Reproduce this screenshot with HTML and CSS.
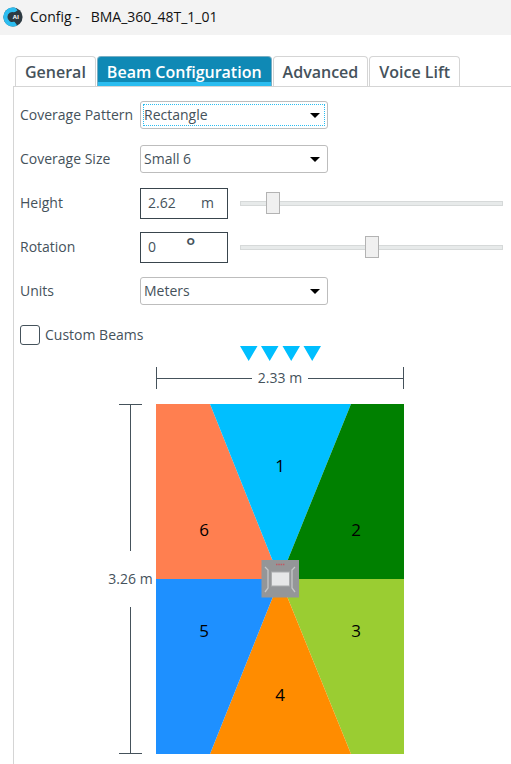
FILE: index.html
```html
<!DOCTYPE html>
<html lang="en">
<head>
<meta charset="utf-8">
<title>Config - BMA_360_48T_1_01</title>
<link rel="stylesheet" href="styles.css">
</head>
<body>
<header class="titlebar">
  <svg class="logo" viewBox="0 0 20 20" aria-hidden="true">
    <circle cx="10" cy="10" r="9.6" fill="#2d3a42"/>
    <path d="M12 .6A9.6 9.6 0 1 0 14.2 18.6L11.4 14.6A5 5 0 1 1 11.4 5.4L14.6 3.2Z" fill="#2cbdf0"/>
    <circle cx="13" cy="10" r="5" fill="#2d3a42"/>
    <text x="9.8" y="12.3" class="logo-text">AI</text>
  </svg>
  <h1 class="title">Config -&nbsp;&nbsp; BMA_360_48T_1_01</h1>
</header>
<nav class="tabs">
  <button class="tab" type="button">General</button>
  <button class="tab tab-active" type="button">Beam Configuration</button>
  <button class="tab" type="button">Advanced</button>
  <button class="tab" type="button">Voice Lift</button>
</nav>
<main class="panel">
  <div class="row">
    <label for="pattern">Coverage Pattern</label>
    <span class="select focused"><select id="pattern"><option>Rectangle</option></select></span>
  </div>
  <div class="row">
    <label for="size">Coverage Size</label>
    <span class="select"><select id="size"><option>Small 6</option></select></span>
  </div>
  <div class="row">
    <label for="height">Height</label>
    <span class="number"><input id="height" type="text" value="2.62"><span class="unit">m</span></span>
    <input class="slider" type="range" min="0" max="1000" value="102" aria-label="Height slider">
  </div>
  <div class="row">
    <label for="rotation">Rotation</label>
    <span class="number"><input id="rotation" class="short" type="text" value="0"><span class="degree">°</span></span>
    <input class="slider" type="range" min="-180" max="180" value="0" aria-label="Rotation slider">
  </div>
  <div class="row">
    <label for="units">Units</label>
    <span class="select"><select id="units"><option>Meters</option></select></span>
  </div>
  <div class="check">
    <input id="custom" type="checkbox">
    <label for="custom">Custom Beams</label>
  </div>
  <section class="diagram">
    <svg class="arrows" width="82" height="15" viewBox="0 0 82 15" aria-hidden="true">
      <path d="M0 0h17.500L8.700 15ZM21 0h17.500L29.700 15ZM42.500 0h17.500L51.200 15ZM63.500 0h17.500L72.200 15Z" fill="#00bfff"/>
    </svg>
    <div class="dim-h"><span>2.33 m</span></div>
    <div class="dim-v"><span>3.26 m</span></div>
    <svg class="beams" width="248" height="350" viewBox="0 0 248 350">
      <path d="M0 0H54L124 175H0Z" fill="#ff7f50"/>
      <path d="M54 0H195L124 175Z" fill="#00bfff"/>
      <path d="M195 0H248V175H124Z" fill="#008000"/>
      <path d="M124 175H248V350H195Z" fill="#9acd32"/>
      <path d="M124 175L195 350H54Z" fill="#ff8c00"/>
      <path d="M0 175H124L54 350H0Z" fill="#1e90ff"/>
      <g class="beam-numbers">
        <text x="124" y="68">1</text>
        <text x="200" y="132">2</text>
        <text x="200" y="233">3</text>
        <text x="124" y="297">4</text>
        <text x="48" y="233">5</text>
        <text x="48" y="132">6</text>
      </g>
      <rect x="105.500" y="156" width="37.500" height="37.500" fill="#949698"/>
      <path d="M109 163l3 3v18l-3 4M139 163l-3 3v18l3 4" fill="none" stroke="#c5c7c8" stroke-width="1.300"/>
      <path d="M120 160.500h9" stroke="#c05862" stroke-width="1.500" stroke-dasharray="1.500 .8"/>
      <rect x="115.500" y="168" width="18" height="14" fill="#e6e7e8" stroke="#aaacad"/>
    </svg>
  </section>
</main>
</body>
</html>
```
FILE: styles.css
```css
* {
  box-sizing: border-box;
}

body {
  margin: 0;
  min-height: 100vh;
  display: flex;
  flex-direction: column;
  background: #fff;
  color: #45525b;
  font: 14px/20px "Open Sans", "Noto Sans", sans-serif;
}

button, input, select {
  font: inherit;
  color: inherit;
}

.titlebar {
  display: flex;
  align-items: center;
  gap: 7px;
  height: 35px;
  padding: 0 3px 2px;
  background: #f3f3f3;
}

.logo {
  width: 20px;
  height: 20px;
}

.logo-text {
  font: bold 6px "Open Sans", sans-serif;
  fill: #fff;
}

.title {
  margin: 0;
  font-size: 14px;
  font-weight: 400;
  color: #111;
}

.tabs {
  display: flex;
  gap: 1px;
  padding: 21px 15px 0;
}

.tab {
  height: 30px;
  padding: 0 9px;
  border: 1px solid #d5d5d5;
  border-bottom: 0;
  border-radius: 4px 4px 0 0;
  background: #fff;
  font-size: 16px;
  font-weight: 600;
  white-space: nowrap;
}

.tab-active {
  border-color: #78aec3;
  background: linear-gradient(#0f89b5 25px, #2bbdf0 25px);
  color: #fff;
}

.panel {
  flex: 1;
  margin-left: 13px;
  padding: 6px 8px 10px 6px;
  border: solid #d5d5d5;
  border-width: 1px 0 0 1px;
}

.row {
  display: flex;
  align-items: center;
  height: 44px;
}

.row label {
  flex: 0 0 120px;
  white-space: nowrap;
}

.select {
  position: relative;
  width: 188px;
  height: 28px;
  border: 1px solid #bdbdbd;
  border-radius: 3px;
}

.select::after {
  content: "";
  position: absolute;
  top: 11px;
  right: 7px;
  border: 5px solid transparent;
  border-top-color: #000;
  border-bottom: 0;
  pointer-events: none;
}

.select select {
  appearance: none;
  display: block;
  width: 100%;
  height: 100%;
  padding: 0 3px;
  border: 0;
  background: none;
  outline: 0;
}

.focused select {
  outline: 1px dotted #2bbdf0;
  outline-offset: -3px;
}

.number {
  display: flex;
  align-items: center;
  flex: 0 0 88px;
  height: 31px;
  padding-left: 7px;
  border: 1px solid #39454d;
}

.number input {
  width: 53px;
  padding: 0;
  border: 0;
  background: none;
  outline: 0;
}

.number .short {
  width: 38px;
}

.degree {
  padding-bottom: 4px;
  font-size: 22px;
  font-weight: 600;
}

.slider {
  appearance: none;
  flex: 1;
  min-width: 0;
  height: 22px;
  margin: 0 0 0 12px;
  background: none;
}

.slider::-webkit-slider-runnable-track {
  height: 5px;
  border: 1px solid #d6d9d9;
  background: #e7eaea;
}

.slider::-webkit-slider-thumb {
  appearance: none;
  width: 14px;
  height: 22px;
  margin-top: -10px;
  border: 1px solid #b3b3b3;
  background: #f0f0f0;
}

.check {
  display: flex;
  align-items: center;
  gap: 5px;
  height: 20px;
  margin-top: 12px;
}

.check input {
  appearance: none;
  width: 20px;
  height: 20px;
  margin: 0;
  border: 1px solid #45525b;
  border-radius: 3px;
}

.diagram {
  display: grid;
  grid-template-columns: 45px 248px;
  column-gap: 3px;
  padding-left: 88px;
}

.arrows {
  grid-column: 2;
  margin: 1px 0 0 84px;
}

.dim-h {
  grid-column: 2;
  display: flex;
  align-items: center;
  gap: 6px;
  height: 22px;
  margin: 6px 0 15px;
  border: solid #45525b;
  border-width: 0 1px;
}

.dim-h::before, .dim-h::after {
  content: "";
  flex: 1;
  height: 1px;
  background: #45525b;
}

.dim-v {
  display: flex;
  flex-direction: column;
  align-items: center;
  gap: 18px;
  white-space: nowrap;
}

.dim-v::before, .dim-v::after {
  content: "";
  flex: 1;
  width: 23px;
  background: linear-gradient(#45525b, #45525b) center / 1px 100% no-repeat;
}

.dim-v::before {
  border-top: 1px solid #45525b;
}

.dim-v::after {
  border-bottom: 1px solid #45525b;
}

.beams {
  display: block;
}

.beam-numbers {
  font-size: 17px;
  fill: #000;
  text-anchor: middle;
}
```
